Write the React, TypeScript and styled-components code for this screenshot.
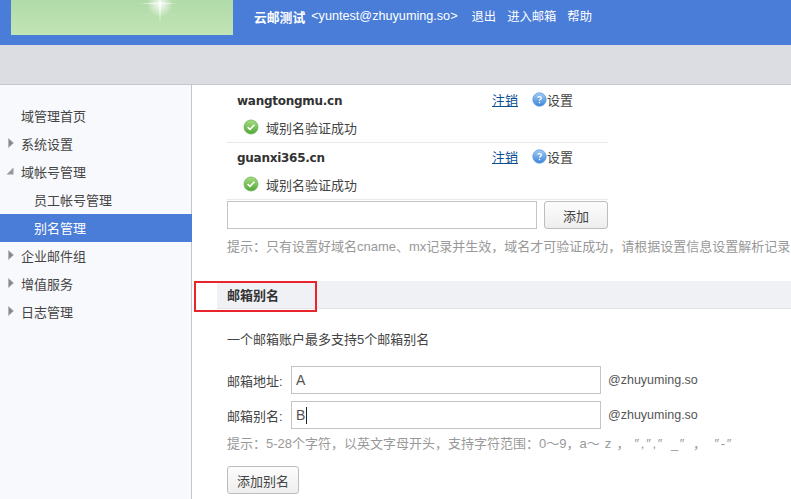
import React from "react";
import styled, { createGlobalStyle } from "styled-components";

const Global = createGlobalStyle`
  html, body { margin: 0; padding: 0; background: #fff; }
  body { font-family: "Liberation Sans", "Noto Sans CJK SC", sans-serif; font-size: 13px; color: #333; }
`;
const Page = styled.div`
  width: 791px; height: 499px; overflow: hidden; display: flex; flex-direction: column;
`;
const Header = styled.header`
  height: 45px; flex: none; background: #4a7dd8; display: flex; align-items: flex-start; padding-left: 11px; box-sizing: border-box;
`;
const Logo = styled.div`
  width: 222px; height: 35px; flex: none; background: linear-gradient(180deg, #b0dba8 0%, #c3e4b6 100%); overflow: hidden;
  svg { display: block; }
`;
const UserBar = styled.div`
  margin-left: 21px; height: 32px; display: flex; align-items: center; color: #fff; white-space: nowrap;
`;
const UserName = styled.b`font-size: 12.8px; font-weight: 700; margin-right: 6px;`;
const Email = styled.span`font-size: 12.65px; margin-right: 14px;`;
const TopLink = styled.span`font-size: 12.3px; margin-right: 11px;`;
const GreyBar = styled.div`
  height: 40px; flex: none; box-sizing: border-box; background: #dcdde2; border-bottom: 1px solid #c6c7cb;
`;
const Body = styled.div`flex: 1; display: flex; min-height: 0;`;
const Side = styled.nav`
  width: 192px; flex: none; box-sizing: border-box; background: #f8f9fc; border-right: 1px solid #c4c5c9; padding-top: 17px;
`;
const MenuRow = styled.div<{ $active?: boolean; $sub?: boolean }>`
  height: 28px; box-sizing: border-box; padding-bottom: 2px; display: flex; align-items: center; position: relative; font-size: 13px;
  padding-left: ${p => (p.$sub ? 34 : 21)}px;
  margin-right: ${p => (p.$active ? -1 : 0)}px;
  background: ${p => (p.$active ? "#4a7dd8" : "transparent")};
  color: ${p => (p.$active ? "#fff" : "#444")};
`;
const Arrow = styled.svg`position: absolute; left: 6px; top: 8px;`;
const Main = styled.main`flex: 1; min-width: 0; position: relative;`;
const Domains = styled.div`width: 381px; margin-left: 35px; padding-top: 1px;`;
const DomainBlock = styled.div`height: 57px; box-sizing: border-box; border-bottom: 1px solid #e9e9e9; position: relative;`;
const DomainHead = styled.div`height: 28px; box-sizing: border-box; padding-bottom: 2px; display: flex; align-items: center;`;
const DomainName = styled.b`
  width: 265px; padding: 3px 0 0 10px; box-sizing: border-box; font-family: "DejaVu Sans", sans-serif; font-size: 12px; letter-spacing: -0.27px; color: #333;
`;
const Logout = styled.a`color: #0b4e94; text-decoration: underline; font-size: 13px; margin-right: 14px;`;
const SetLink = styled.span`display: flex; align-items: center; font-size: 13px; color: #444;`;
const Status = styled.div`height: 26px; display: flex; align-items: center; padding-left: 16px; gap: 7px; font-size: 13px; color: #444;`;
const AddRow = styled.div`display: flex; align-items: center; gap: 7px; margin-top: 1px;`;
const TextBox = styled.div<{ $w: number }>`
  width: ${p => p.$w}px; height: 28px; box-sizing: border-box; border: 1px solid #c4c4c4; background: #fff;
  padding-left: 4px; display: flex; align-items: center; font-size: 14px; color: #555; flex: none;
`;
const Caret = styled.i`display: inline-block; width: 1px; height: 17px; background: #222; margin-left: 1px;`;
const Btn = styled.button<{ $w: number }>`
  width: ${p => p.$w}px; height: 28px; flex: none; padding: 0; border: 1px solid #bdbdbd; border-radius: 3px;
  background: linear-gradient(180deg, #fcfcfc, #eeeeee); color: #444; font: 13px "Liberation Sans", "Noto Sans CJK SC", sans-serif;
`;
const Hint = styled.div`font-size: 13px; color: #999; white-space: nowrap;`;
const TopHint = styled(Hint)`margin: 7px 0 0 35px;`;
const SectionBar = styled.div`
  margin: 26px 0 0 25px; height: 28px; box-sizing: border-box; background: #f0f1f5; border-bottom: 1px solid #e4e5e8;
  display: flex; align-items: center; padding-left: 10px; font-weight: 700; font-size: 13px; color: #333;
`;
const RedBox = styled.div`
  position: absolute; left: 2px; top: 196px; width: 123px; height: 31px; box-sizing: border-box; border: 2px solid #e8252b; pointer-events: none;
`;
const Section = styled.div`padding-left: 35px;`;
const Intro = styled.div`margin-top: 23px; height: 16px; line-height: 16px; font-size: 13px; color: #444;`;
const FormRow = styled.div`display: flex; align-items: center; height: 28px; margin-bottom: 7px;`;
const Form = styled.div`margin-top: 18px;`;
const Label = styled.span`width: 64px; flex: none; font-size: 13px; color: #444;`;
const Domain = styled.span`margin-left: 7px; font-size: 12.5px; color: #555;`;
const FormHint = styled(Hint)`height: 16px; line-height: 16px; word-spacing: 1.5px;`;
const Quotes = styled.span`letter-spacing: 1.7px;`;
const AddAlias = styled.div`margin-top: 14px;`;

const Check = () => (
  <svg width="16" height="16" viewBox="0 0 16 16">
    <defs><linearGradient id="g" x1="0" y1="0" x2="0" y2="1"><stop offset="0" stopColor="#a8dc80" /><stop offset="1" stopColor="#4fa83a" /></linearGradient></defs>
    <circle cx="8" cy="8" r="7" fill="url(#g)" stroke="#6fb35a" strokeWidth="0.8" />
    <path d="M4.6 8.2 L7 10.4 L11.4 5.8" fill="none" stroke="#fff" strokeWidth="1.6" />
  </svg>
);
const Help = () => (
  <svg width="15" height="15" viewBox="0 0 15 15">
    <defs><linearGradient id="b" x1="0" y1="0" x2="0" y2="1"><stop offset="0" stopColor="#a4cdf5" /><stop offset="1" stopColor="#3d85d8" /></linearGradient></defs>
    <circle cx="7.5" cy="7.5" r="6.7" fill="url(#b)" stroke="#5a9be0" strokeWidth="0.8" />
    <path d="M5.6 5.7 C5.8 4.2 9.4 4.2 9.4 6 C9.4 7.2 7.5 7.2 7.5 8.7 M7.5 10 V11.2" fill="none" stroke="#fff" strokeWidth="1.3" />
  </svg>
);
const ArrowRight = () => (
  <Arrow width="9" height="10" viewBox="0 0 9 10"><path d="M2.5 0.5 L7.5 5 L2.5 9.5 Z" fill="#888" stroke="#aaa" strokeWidth="0.5" /></Arrow>
);
const ArrowOpen = () => (
  <Arrow width="9" height="10" viewBox="0 0 9 10"><path d="M0.5 8.5 L7.5 8.5 L7.5 1.5 Z" fill="#999" /></Arrow>
);

const domains = ["wangtongmu.cn", "guanxi365.cn"];
const menu: { t: string; arrow?: "r" | "o"; sub?: boolean; active?: boolean }[] = [
  { t: "域管理首页" },
  { t: "系统设置", arrow: "r" },
  { t: "域帐号管理", arrow: "o" },
  { t: "员工帐号管理", sub: true },
  { t: "别名管理", sub: true, active: true },
  { t: "企业邮件组", arrow: "r" },
  { t: "增值服务", arrow: "r" },
  { t: "日志管理", arrow: "r" },
];

export default function App() {
  return (
    <Page>
      <Global />
      <Header>
        <Logo>
          <svg width="222" height="35" viewBox="0 0 222 35">
            <defs>
              <radialGradient id="s"><stop offset="0" stopColor="#fff" stopOpacity="0.9" /><stop offset="1" stopColor="#fff" stopOpacity="0" /></radialGradient>
            </defs>
            <circle cx="149" cy="4" r="13" fill="url(#s)" />
            <path d="M149 -6 L150 4 L149 24 L148 4 Z" fill="#fff" opacity="0.75" />
            <path d="M128 3.5 L149 2.5 L166 3.5 L149 4.5 Z" fill="#fff" opacity="0.6" />
          </svg>
        </Logo>
        <UserBar>
          <UserName>云邮测试</UserName>
          <Email>&lt;yuntest@zhuyuming.so&gt;</Email>
          <TopLink>退出</TopLink>
          <TopLink>进入邮箱</TopLink>
          <TopLink>帮助</TopLink>
        </UserBar>
      </Header>
      <GreyBar />
      <Body>
        <Side>
          {menu.map(m => (
            <MenuRow key={m.t} $sub={m.sub} $active={m.active}>
              {m.arrow === "r" && <ArrowRight />}
              {m.arrow === "o" && <ArrowOpen />}
              {m.t}
            </MenuRow>
          ))}
        </Side>
        <Main>
          <Domains>
            {domains.map(d => (
              <DomainBlock key={d}>
                <DomainHead>
                  <DomainName>{d}</DomainName>
                  <Logout>注销</Logout>
                  <SetLink><Help />设置</SetLink>
                </DomainHead>
                <Status><Check />域别名验证成功</Status>
              </DomainBlock>
            ))}
            <AddRow>
              <TextBox $w={310} />
              <Btn $w={64}>添加</Btn>
            </AddRow>
          </Domains>
          <TopHint>提示：只有设置好域名cname、mx记录并生效，域名才可验证成功，请根据设置信息设置解析记录</TopHint>
          <SectionBar>邮箱别名</SectionBar>
          <RedBox />
          <Section>
            <Intro>一个邮箱账户最多支持5个邮箱别名</Intro>
            <Form>
              <FormRow>
                <Label>邮箱地址:</Label>
                <TextBox $w={310}>A</TextBox>
                <Domain>@zhuyuming.so</Domain>
              </FormRow>
              <FormRow>
                <Label>邮箱别名:</Label>
                <TextBox $w={310}>B<Caret /></TextBox>
                <Domain>@zhuyuming.so</Domain>
              </FormRow>
            </Form>
            <FormHint>提示：5-28个字符，以英文字母开头，支持字符范围：0～9，a～ z ， <Quotes>″,″,″ _″ ， ″-″</Quotes></FormHint>
            <AddAlias><Btn $w={72}>添加别名</Btn></AddAlias>
          </Section>
        </Main>
      </Body>
    </Page>
  );
}
